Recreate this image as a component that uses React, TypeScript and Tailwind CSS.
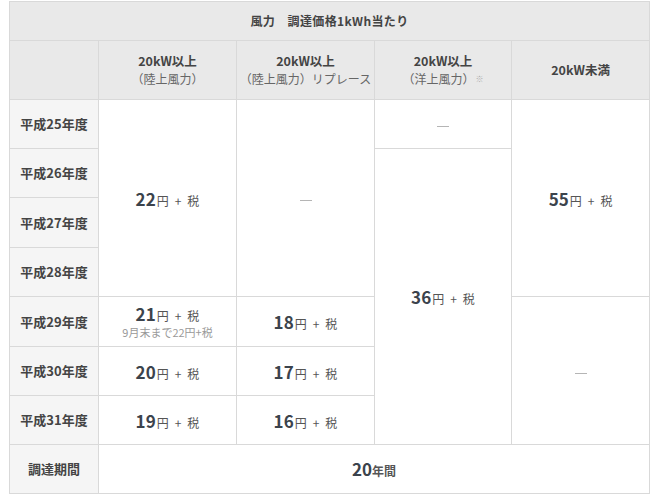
const font = { fontFamily: '"Noto Sans CJK JP", "Noto Sans", sans-serif' };

function Price({ n, note }: { n: string; note?: string }) {
  return (
    <div className="leading-none">
      <span className="text-[17px] font-bold text-[#3b434c]">{n}</span>
      <span className="text-[12px] text-[#555] ml-px">
        円<span className="mx-[6px]">+</span>税
      </span>
      {note && <div className="text-[11px] text-[#999] mt-[5px]">{note}</div>}
    </div>
  );
}

function Dash() {
  return <span className="inline-block w-[12px] h-px bg-[#b5b5b5] align-middle" />;
}

const th = 'border border-[#d9d9d9] bg-[#f5f5f5] text-[13px] font-bold text-[#444] text-center align-middle';
const td = 'border border-[#d9d9d9] bg-white text-center align-middle';
const hd = 'border border-[#d9d9d9] bg-[#e9e9e9] text-center align-middle';

function Head({ sub, mark }: { sub: string; mark?: boolean }) {
  return (
    <>
      <div className="text-[12.5px] font-bold text-[#444] leading-[18px]">20kW以上</div>
      <div className="text-[12px] text-[#666] leading-[18px] whitespace-nowrap">
        {sub}
        {mark && <span className="text-[8px] text-[#aaa] align-top ml-px">※</span>}
      </div>
    </>
  );
}

export default function App() {
  return (
    <div className="bg-white w-[652px] h-[500px] pt-px pl-[9px]" style={font}>
      <table className="table-fixed border-collapse w-[640px] border border-[#cbcbcb]">
        <colgroup>
          <col className="w-[89px]" />
          <col className="w-[138px]" />
          <col className="w-[138px]" />
          <col className="w-[137px]" />
          <col className="w-[138px]" />
        </colgroup>
        <tbody>
          <tr className="h-[39px]">
            <td colSpan={5} className={`${hd} text-[12px] font-bold text-[#444] tracking-[0.03em]`}>
              風力　調達価格1kWh当たり
            </td>
          </tr>
          <tr className="h-[59px]">
            <td className={hd}></td>
            <td className={hd}><Head sub="（陸上風力）" /></td>
            <td className={hd}><Head sub="（陸上風力）リプレース" /></td>
            <td className={hd}><Head sub="（洋上風力）" mark /></td>
            <td className={`${hd} text-[12.5px] font-bold text-[#444]`}>20kW未満</td>
          </tr>
          <tr className="h-[49px]">
            <td className={th}>平成25年度</td>
            <td rowSpan={4} className={td}><Price n="22" /></td>
            <td rowSpan={4} className={td}><Dash /></td>
            <td className={td}><Dash /></td>
            <td rowSpan={4} className={td}><Price n="55" /></td>
          </tr>
          <tr className="h-[49px]">
            <td className={th}>平成26年度</td>
            <td rowSpan={6} className={td}><Price n="36" /></td>
          </tr>
          <tr className="h-[50px]">
            <td className={th}>平成27年度</td>
          </tr>
          <tr className="h-[49px]">
            <td className={th}>平成28年度</td>
          </tr>
          <tr className="h-[50px]">
            <td className={th}>平成29年度</td>
            <td className={td}><Price n="21" note="9月末まで22円+税" /></td>
            <td className={td}><Price n="18" /></td>
            <td rowSpan={3} className={td}><Dash /></td>
          </tr>
          <tr className="h-[49px]">
            <td className={th}>平成30年度</td>
            <td className={td}><Price n="20" /></td>
            <td className={td}><Price n="17" /></td>
          </tr>
          <tr className="h-[49px]">
            <td className={th}>平成31年度</td>
            <td className={td}><Price n="19" /></td>
            <td className={td}><Price n="16" /></td>
          </tr>
          <tr className="h-[49px]">
            <td className={th}>調達期間</td>
            <td colSpan={4} className={td}>
              <span className="text-[17px] font-bold text-[#3b434c]">20</span>
              <span className="text-[12px] font-bold text-[#555]">年間</span>
            </td>
          </tr>
        </tbody>
      </table>
    </div>
  );
}
